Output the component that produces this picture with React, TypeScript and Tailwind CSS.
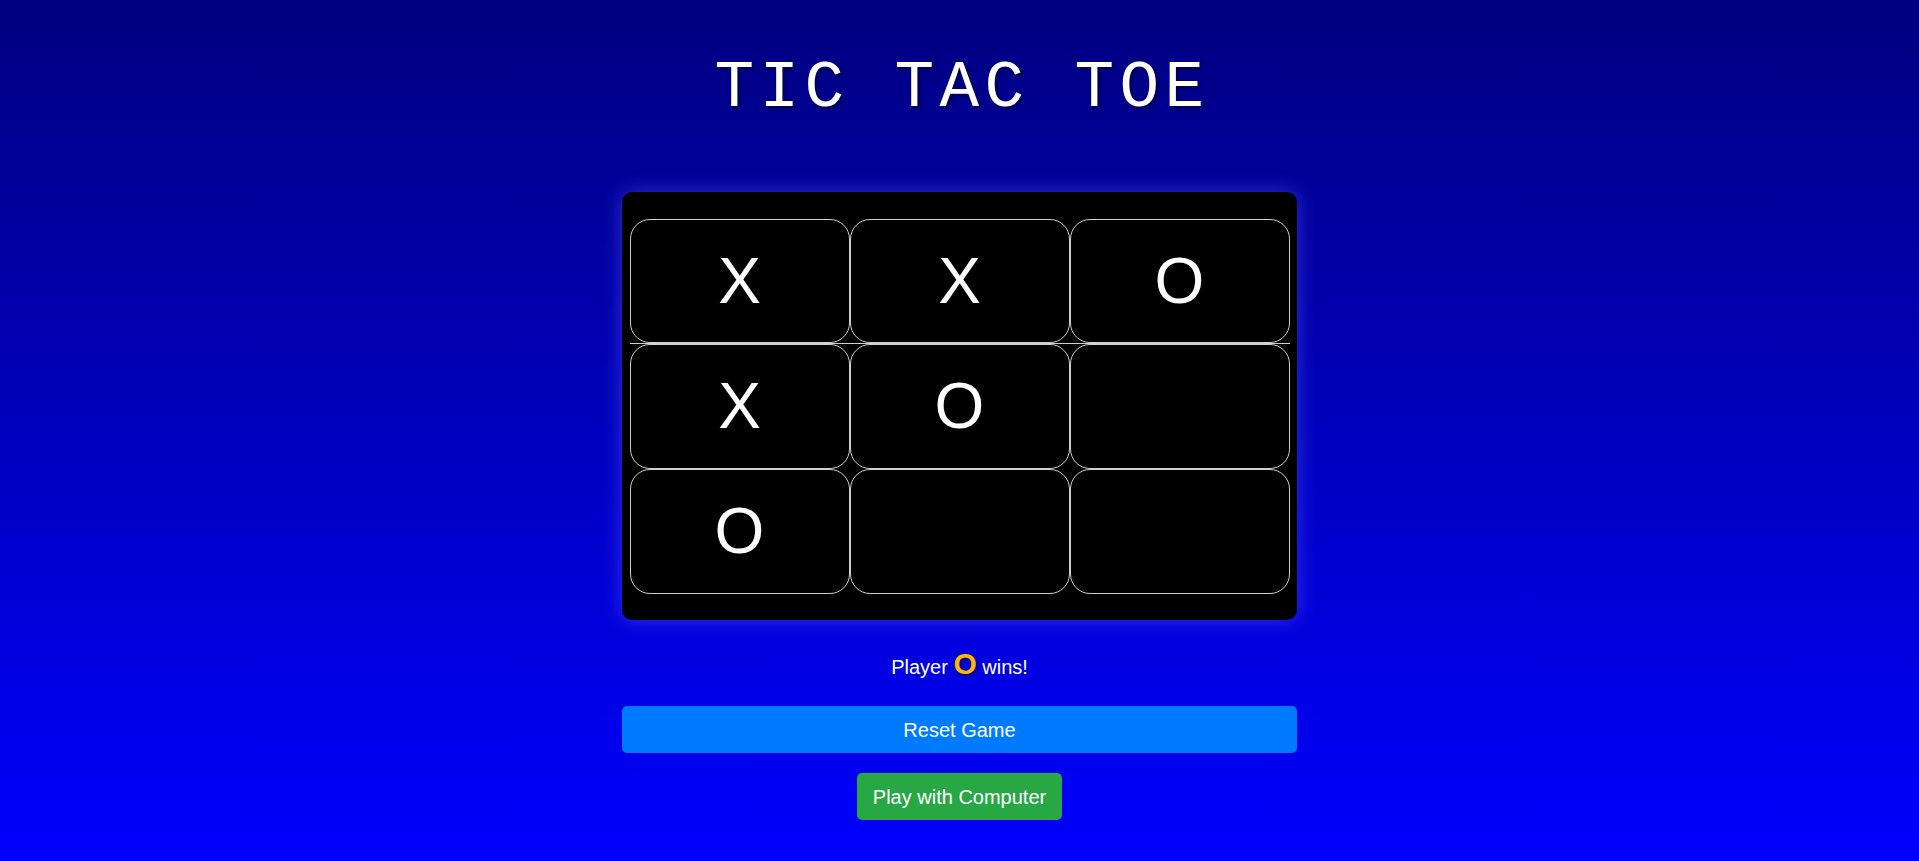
import React from "react";

const board: string[][] = [
  ["X", "X", "O"],
  ["X", "O", ""],
  ["O", "", ""],
];

function Cell({ v, h }: { v: string; h: string }) {
  return (
    <div
      className={`w-[220px] ${h} flex items-center justify-center border border-[#cfcfcf] rounded-[20px] bg-black text-white text-[64px] leading-none`}
    >
      {v}
    </div>
  );
}

export default function App() {
  return (
    <div
      className="w-full h-screen min-h-screen flex flex-col items-center bg-gradient-to-b from-[#000080] to-[#0000ff] text-white"
      style={{ fontFamily: '"Liberation Sans", Arial, sans-serif' }}
    >
      <h1
        className="mt-[51px] pl-[5px] text-[66px] leading-[75px] tracking-[5.4px] text-white [text-shadow:2px_2px_4px_rgba(0,0,0,0.5)]"
        style={{ fontFamily: '"Liberation Mono", "Courier New", monospace' }}
      >
        TIC TAC TOE
      </h1>

      <div className="mt-[66px] w-[675px] h-[428px] bg-black rounded-[10px] flex flex-col items-center justify-center shadow-[0_0_20px_rgba(80,80,255,0.6)]">
        <div className="flex border-b border-[#d0d0d0]">
          {board[0].map((v, i) => (
            <Cell key={i} v={v} h="h-[124px]" />
          ))}
        </div>
        <div className="flex">
          {board[1].map((v, i) => (
            <Cell key={i} v={v} h="h-[125px]" />
          ))}
        </div>
        <div className="flex">
          {board[2].map((v, i) => (
            <Cell key={i} v={v} h="h-[125px]" />
          ))}
        </div>
      </div>

      <div className="mt-[21px] text-[20px] text-white">
        Player{" "}
        <span className="text-[30px] font-bold text-[#ffb700] [text-shadow:2px_2px_4px_rgba(0,0,0,0.5)]">
          O
        </span>{" "}
        wins!
      </div>

      <button className="mt-[20px] w-[675px] h-[47px] rounded-[5px] bg-[#007bff] text-white text-[20px]">
        Reset Game
      </button>

      <button className="mt-[20px] px-4 h-[47px] rounded-[5px] bg-[#28a745] text-white text-[20px]">
        Play with Computer
      </button>
    </div>
  );
}
